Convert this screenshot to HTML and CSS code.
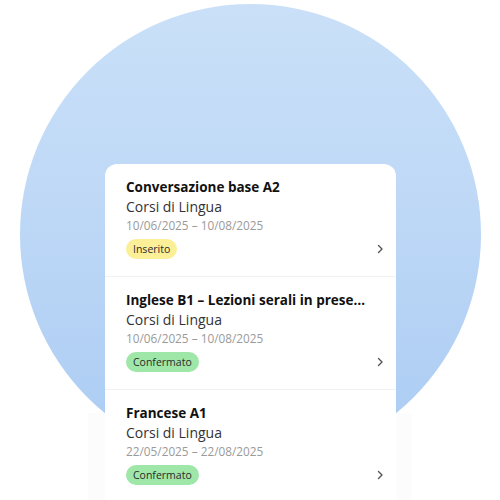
FILE: index.html
```html
<!DOCTYPE html>
<html>
<head>
    <title>I miei corsi</title>
    <link rel="stylesheet" href="styles.css">
</head>
<body>
    <div class="stage">
        <div class="card">
            <div class="course">
                <div class="info">
                    <div class="title">Conversazione base A2</div>
                    <div class="category">Corsi di Lingua</div>
                    <div class="dates">10/06/2025 – 10/08/2025</div>
                    <span class="badge badge-pending">Inserito</span>
                </div>
                <svg class="chevron" width="12" height="12" viewBox="0 0 12 12"><path d="M4.5 2.5 L8 6 L4.5 9.5" fill="none" stroke="#555" stroke-width="1.4" stroke-linecap="round" stroke-linejoin="round"/></svg>
            </div>
            <div class="course">
                <div class="info">
                    <div class="title">Inglese B1 – Lezioni serali in presenza</div>
                    <div class="category">Corsi di Lingua</div>
                    <div class="dates">10/06/2025 – 10/08/2025</div>
                    <span class="badge badge-ok">Confermato</span>
                </div>
                <svg class="chevron" width="12" height="12" viewBox="0 0 12 12"><path d="M4.5 2.5 L8 6 L4.5 9.5" fill="none" stroke="#555" stroke-width="1.4" stroke-linecap="round" stroke-linejoin="round"/></svg>
            </div>
            <div class="course">
                <div class="info">
                    <div class="title">Francese A1</div>
                    <div class="category">Corsi di Lingua</div>
                    <div class="dates">22/05/2025 – 22/08/2025</div>
                    <span class="badge badge-ok">Confermato</span>
                </div>
                <svg class="chevron" width="12" height="12" viewBox="0 0 12 12"><path d="M4.5 2.5 L8 6 L4.5 9.5" fill="none" stroke="#555" stroke-width="1.4" stroke-linecap="round" stroke-linejoin="round"/></svg>
            </div>
        </div>
    </div>
</body>
</html>
```

FILE: styles.css
```css
body {
    margin: 0;
    background-color: #ffffff;
    font-family: "Open Sans", "Noto Sans", sans-serif;
}

.stage {
    position: relative;
    width: 500px;
    height: 500px;
    overflow: hidden;
    padding-top: 164px;
    box-sizing: border-box;
}

/* blue circle behind the list */
.stage::before {
    content: "";
    position: absolute;
    left: 20px;
    top: 4px;
    width: 461px;
    height: 461px;
    border-radius: 50%;
    background: linear-gradient(180deg, #cae0f8 0%, #bcd7f6 50%, #aacbf3 100%);
}

/* white fade that cuts the circle at the bottom */
.stage::after {
    content: "";
    position: absolute;
    left: 0;
    right: 0;
    top: 413px;
    bottom: 0;
    background: linear-gradient(90deg, #ffffff 88px, #fcfcfd 88px, #fcfcfd 412px, #ffffff 412px);
}

.card {
    position: relative;
    z-index: 1;
    width: 291px;
    margin-left: 105px;
    background: #ffffff;
    border-radius: 12px 12px 0 0;
}

.course {
    display: flex;
    align-items: flex-end;
    padding: 13px 10px 17px 21px;
    border-bottom: 1px solid #f1f1f1;
}

.info {
    flex: 1;
    min-width: 0;
    display: flex;
    flex-direction: column;
    align-items: flex-start;
}

.title {
    max-width: 100%;
    box-sizing: border-box;
    font-size: 13.5px;
    font-weight: 700;
    line-height: 20px;
    color: #111111;
    white-space: nowrap;
    overflow: hidden;
    text-overflow: ellipsis;
    padding-right: 4px;
}

.category {
    font-size: 14px;
    line-height: 19px;
    color: #333333;
}

.dates {
    font-size: 11.8px;
    line-height: 18px;
    color: #9a9a9a;
    margin-bottom: 5px;
}

.badge {
    display: block;
    height: 20px;
    line-height: 20px;
    padding: 0 7px;
    border-radius: 10px;
    font-size: 10.5px;
    color: #2a2a2a;
}

.badge-pending {
    background-color: #fbef98;
}

.badge-ok {
    background-color: #9fe6a9;
}

.chevron {
    flex-shrink: 0;
    margin-bottom: 4px;
}
```
